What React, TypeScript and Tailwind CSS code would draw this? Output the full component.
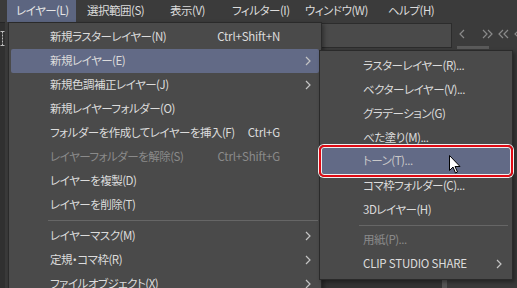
import React from "react";

const Chevron = ({ dir = "right", color = "#c4c4c4" }: { dir?: "right" | "left"; color?: string }) => (
  <svg width="6" height="10" viewBox="0 0 6 10">
    <polyline
      points={dir === "right" ? "1,1 5,5 1,9" : "5,1 1,5 5,9"}
      fill="none"
      stroke={color}
      strokeWidth="1.2"
    />
  </svg>
);

type Item = { label: string; shortcut?: string; sub?: boolean; disabled?: boolean; active?: boolean; sep?: boolean };

const mainItems: Item[] = [
  { label: "新規ラスターレイヤー(N)", shortcut: "Ctrl+Shift+N" },
  { label: "新規レイヤー(E)", sub: true, active: true },
  { label: "新規色調補正レイヤー(J)", sub: true },
  { label: "新規レイヤーフォルダー(O)" },
  { label: "フォルダーを作成してレイヤーを挿入(F)", shortcut: "Ctrl+G" },
  { label: "レイヤーフォルダーを解除(S)", shortcut: "Ctrl+Shift+G", disabled: true },
  { label: "レイヤーを複製(D)" },
  { label: "レイヤーを削除(T)" },
  { label: "", sep: true },
  { label: "レイヤーマスク(M)", sub: true },
  { label: "定規・コマ枠(R)", sub: true },
  { label: "ファイルオブジェクト(X)", sub: true },
];

const subItems: Item[] = [
  { label: "ラスターレイヤー(R)..." },
  { label: "ベクターレイヤー(V)..." },
  { label: "グラデーション(G)" },
  { label: "べた塗り(M)..." },
  { label: "トーン(T)...", active: true },
  { label: "コマ枠フォルダー(C)..." },
  { label: "3Dレイヤー(H)" },
  { label: "", sep: true },
  { label: "用紙(P)...", disabled: true },
  { label: "CLIP STUDIO SHARE", sub: true },
];

export default function App() {
  return (
    <div
      className="relative w-[517px] h-[288px] overflow-hidden bg-[#3a3a3a] text-[11.5px] leading-none text-[#dcdcdc] [font-feature-settings:'palt'] tracking-[-0.5px]"
      style={{ fontFamily: '"Noto Sans CJK JP", "Noto Sans", sans-serif' }}
    >
      {/* Menu bar */}
      <div className="flex h-[22px] items-stretch whitespace-nowrap bg-[#3b3b3b] pl-[7px]">
        <div className="flex w-[69px] shrink-0 items-center bg-[#5c6580] pl-[9px] text-[#e6e6e6]">レイヤー(L)</div>
        <div className="flex w-[94px] shrink-0 items-center pl-[11px]">選択範囲(S)</div>
        <div className="flex w-[62px] shrink-0 items-center">表示(V)</div>
        <div className="flex w-[73px] shrink-0 items-center">フィルター(I)</div>
        <div className="flex w-[83px] shrink-0 items-center">ウィンドウ(W)</div>
        <div className="flex shrink-0 items-center">ヘルプ(H)</div>
      </div>

      {/* Body */}
      <div className="flex h-[266px]">
        <div className="flex w-[8px] flex-col items-center border-t border-[#262626] bg-[#303030] pt-[8px]">
          <svg width="5" height="15" viewBox="0 0 5 15">
            <line x1="0.5" y1="0.5" x2="4.5" y2="0.5" stroke="#bdbdbd" />
            <line x1="2.5" y1="0.5" x2="2.5" y2="14.5" stroke="#bdbdbd" strokeDasharray="2 1" />
            <line x1="0.5" y1="14.5" x2="4.5" y2="14.5" stroke="#bdbdbd" />
          </svg>
        </div>
        <div className="flex flex-1 flex-col">
          <div className="flex h-[28px] items-start bg-[#3b3b3b]">
            <div className="w-[314px] shrink-0" />
            <div className="mt-[1px] h-[25px] w-[133px] shrink-0 border border-[#2c2c2c] bg-[#4a4a4a]" />
            <div className="relative flex h-[28px] flex-1 items-start pt-[7px]">
              <div className="ml-[7px] flex">
                <Chevron dir="left" color="#8a8a8a" />
              </div>
              <div className="ml-[17px] flex -space-x-[1px]">
                <Chevron color="#8a8a8a" />
                <Chevron color="#8a8a8a" />
              </div>
              <div className="ml-[5px] flex -space-x-[1px]">
                <Chevron dir="left" color="#8a8a8a" />
                <Chevron dir="left" color="#8a8a8a" />
              </div>
              <div className="ml-[5px] flex">
                <Chevron dir="left" color="#8a8a8a" />
              </div>
              <div className="absolute left-[5px] top-[24px] h-[3px] w-[32px] bg-[#5a5a5a]" />
            </div>
          </div>
          <div className="flex flex-1">
            <div className="w-[314px] shrink-0" />
            <div className="w-[123px] shrink-0 bg-[#333333]" />
            <div className="w-[5px] shrink-0 bg-[#555555]" />
            <div className="flex-1 bg-[#3a3a3a]" />
          </div>
        </div>
      </div>

      {/* Main dropdown */}
      <div className="absolute left-[8px] top-[22px] w-[314px] border border-[#2a2a2a] bg-[#4a4a4a] pt-[2px] shadow-[2px_2px_4px_rgba(0,0,0,0.35)]">
        {mainItems.map((it, i) =>
          it.sep ? (
            <div key={i} className="flex h-[7px] items-center pl-[39px] pr-[3px]">
              <div className="h-px w-full bg-[#666666]" />
            </div>
          ) : (
            <div key={i} className="flex h-[24px] px-[2px]">
              <div
                className={`flex flex-1 items-center whitespace-nowrap rounded-[2px] pl-[39px] ${it.active ? "bg-[#626a86]" : ""} ${it.disabled ? "text-[#8a8a8a]" : ""}`}
              >
                <span className="flex-1">{it.label}</span>
                <span className="tracking-[-0.2px]">{it.shortcut ?? ""}</span>
                <span className="w-[17px]" />
                <span className="flex w-[22px] justify-center">{it.sub ? <Chevron /> : null}</span>
              </div>
            </div>
          )
        )}
      </div>

      {/* Submenu */}
      <div className="absolute left-[319px] top-[50px] w-[194px] border border-[#2a2a2a] bg-[#4a4a4a] pb-[3px] pt-[3px] shadow-[2px_2px_4px_rgba(0,0,0,0.4)]">
        {subItems.map((it, i) =>
          it.sep ? (
            <div key={i} className="flex h-[6px] items-center pl-[39px] pr-[4px]">
              <div className="h-px w-full bg-[#666666]" />
            </div>
          ) : (
            <div key={i} className="relative flex h-[24px] px-[2px]">
              {it.active && (
                <div className="absolute -left-[1px] -right-[1px] -top-[5px] -bottom-[3px] rounded-[5px] border-2 border-[#e10a14] shadow-[0_0_0_1px_#f0f0f0,inset_0_0_0_1px_#f0f0f0]" />
              )}
              <div
                className={`flex flex-1 items-center whitespace-nowrap rounded-[2px] pl-[41px] ${it.active ? "-mt-[2px] bg-[#626a86] text-[#c9c9c9]" : ""} ${it.disabled ? "text-[#8a8a8a]" : ""}`}
              >
                <span className={`flex-1 ${it.sub ? "tracking-[-0.2px]" : ""}`}>{it.label}</span>
                <span className="flex w-[22px] justify-center">{it.sub ? <Chevron /> : null}</span>
              </div>
            </div>
          )
        )}
      </div>

      {/* Cursor */}
      <svg className="absolute left-[449px] top-[155px]" width="12" height="19" viewBox="0 0 12 19">
        <path d="M0.5,0.5 L0.5,15.5 L4,12 L6.5,18 L8.5,17 L6,11.5 L11,11.5 Z" fill="#ffffff" stroke="#000000" strokeWidth="1" strokeLinejoin="miter" />
      </svg>
    </div>
  );
}
